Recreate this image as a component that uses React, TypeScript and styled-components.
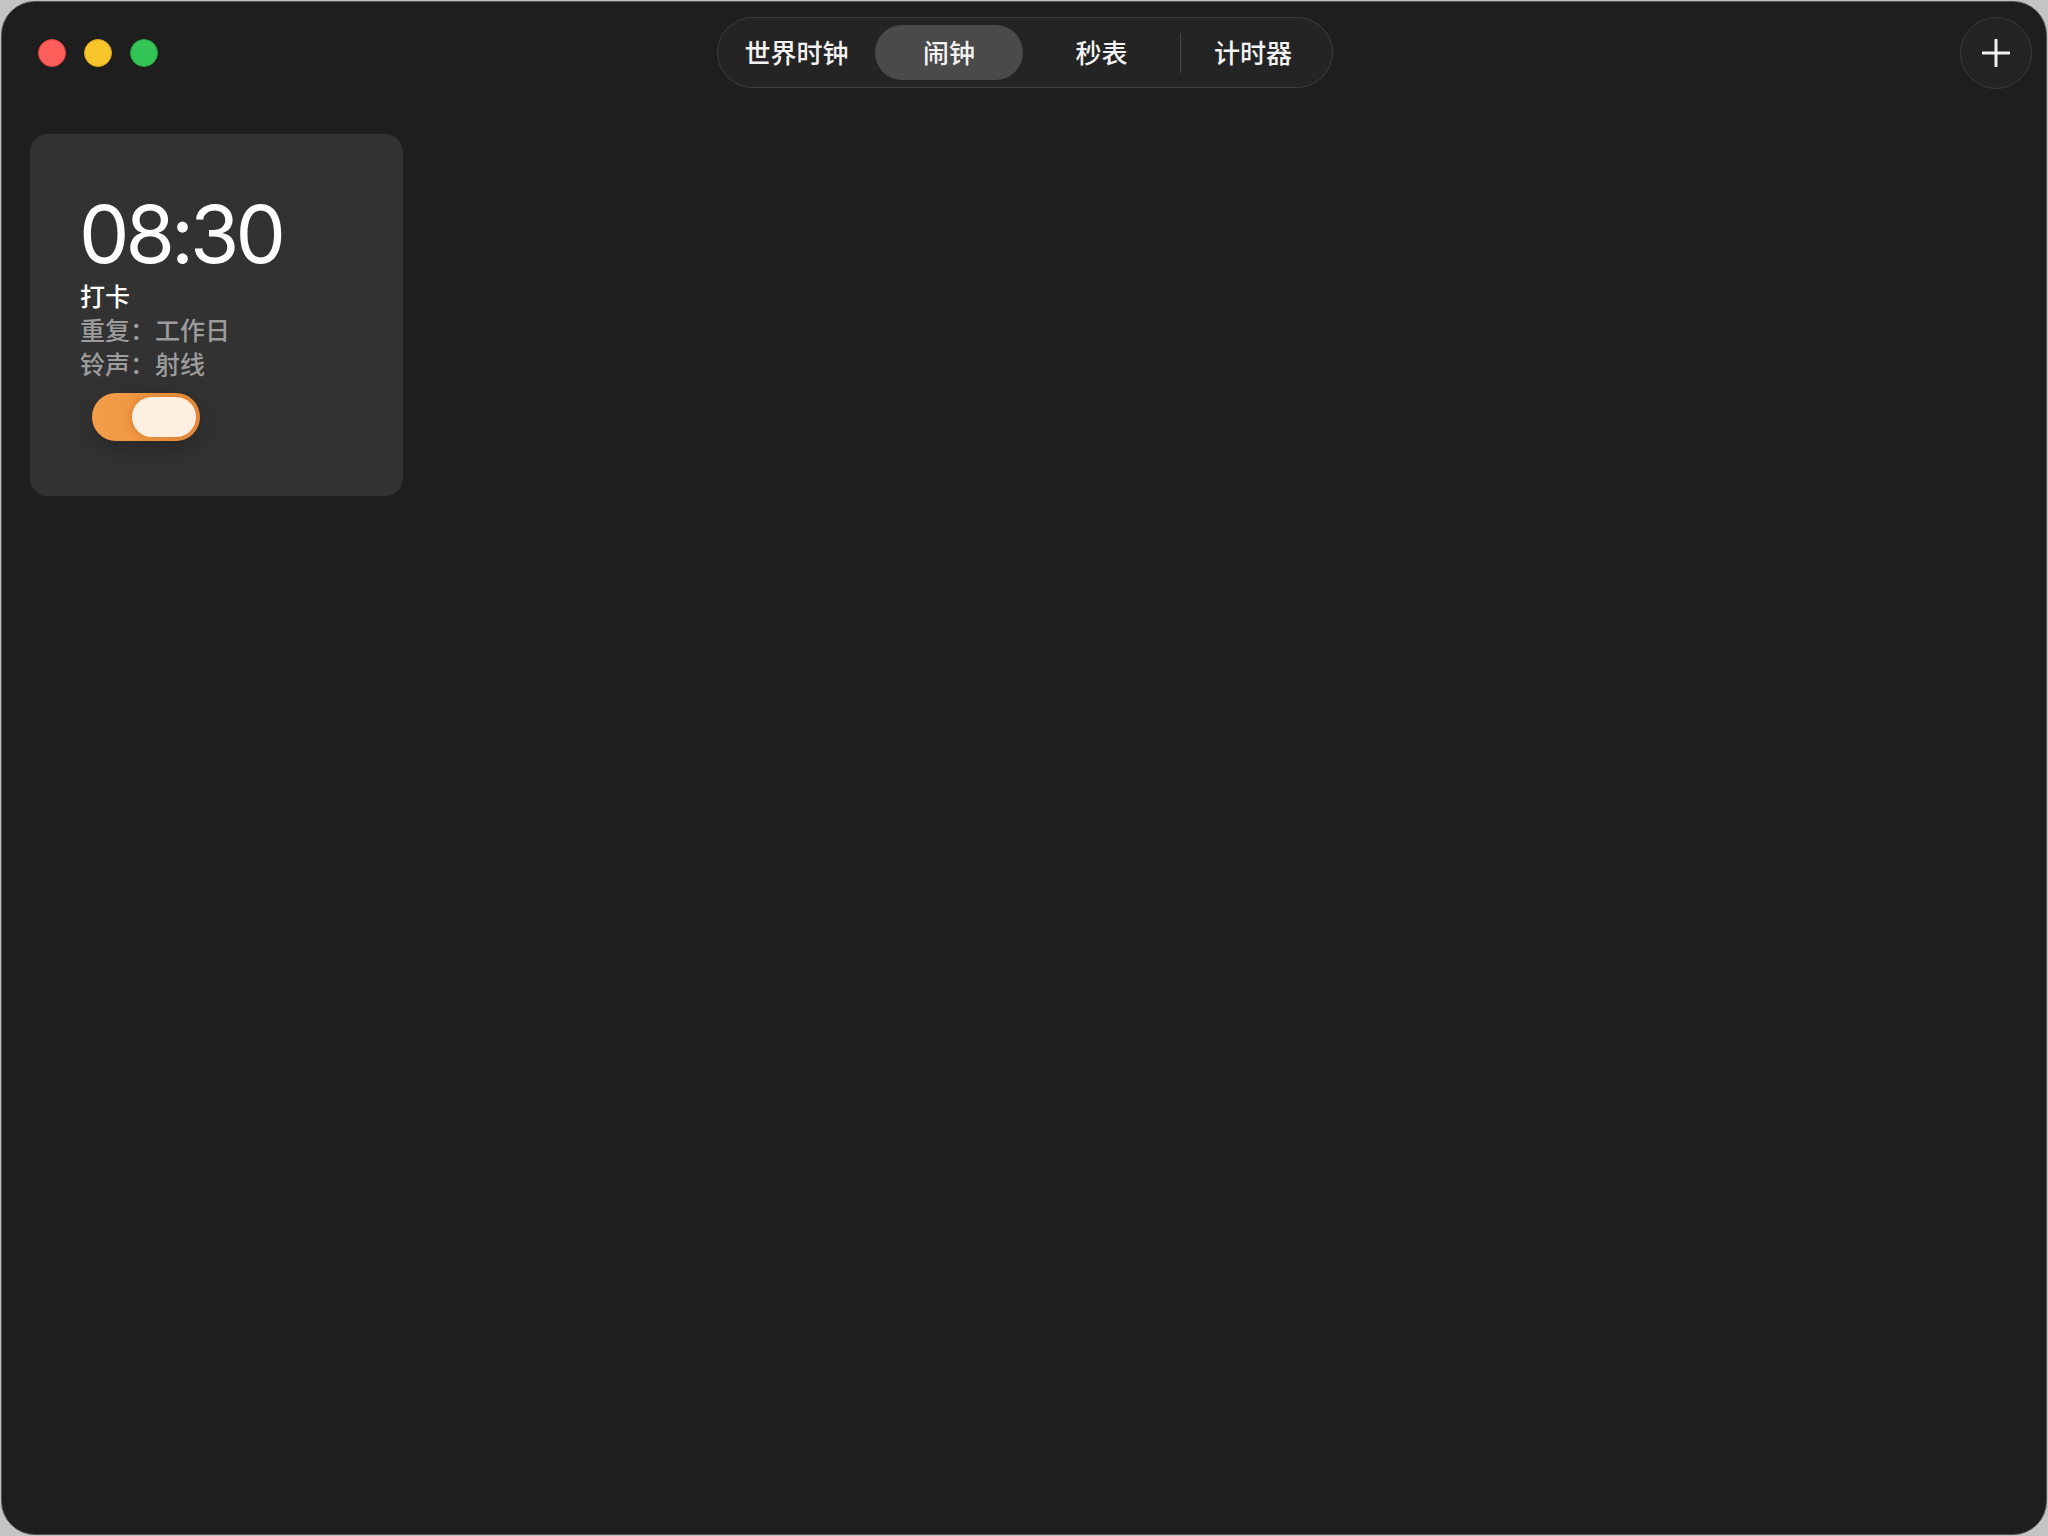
import React from "react";
import styled, { createGlobalStyle } from "styled-components";

const GlobalStyle = createGlobalStyle`
  html, body {
    margin: 0;
    padding: 0;
    background: #c4c4c4;
  }
  body {
    font-family: Inter, "Noto Sans", "Noto Sans CJK SC", sans-serif;
  }
`;

interface Alarm {
  time: string;
  label: string;
  repeat: string;
  sound: string;
  enabled: boolean;
}

const tabs = [
  { label: "世界时钟", width: 143 },
  { label: "闹钟", width: 148 },
  { label: "秒表", width: 157 },
  { label: "计时器", width: 144 },
];

const alarms: Alarm[] = [
  { time: "08:30", label: "打卡", repeat: "工作日", sound: "射线", enabled: true },
];

export default function App() {
  return (
    <>
      <GlobalStyle />
      <Window>
        <Header>
          <Lights>
            <Light color="#ff5f5a" ring="#e2443f" />
            <Light color="#f6c62c" ring="#dca81a" />
            <Light color="#33c555" ring="#20a53f" />
          </Lights>

          <Segmented>
            {tabs.map((tab, i) => (
              <React.Fragment key={tab.label}>
                {i === 3 && <Separator />}
                <Tab $active={i === 1} $width={tab.width} $gap={i === 0}>
                  {tab.label}
                </Tab>
              </React.Fragment>
            ))}
          </Segmented>

          <AddButton aria-label="添加">
            <svg width="28" height="28" viewBox="0 0 28 28">
              <path d="M14 1v26M1 14h26" stroke="#f2f2f2" strokeWidth="3" strokeLinecap="round" />
            </svg>
          </AddButton>
        </Header>

        <Content>
          {alarms.map((alarm) => (
            <AlarmCard key={alarm.time + alarm.label} alarm={alarm} />
          ))}
        </Content>
      </Window>
    </>
  );
}

const AlarmCard: React.FC<{ alarm: Alarm }> = ({ alarm }) => {
  return (
    <Card>
      <Time>{alarm.time}</Time>
      <Label>{alarm.label}</Label>
      <Meta>{`重复：${alarm.repeat}`}</Meta>
      <Meta>{`铃声：${alarm.sound}`}</Meta>
      <Toggle $on={alarm.enabled}>
        <Knob />
      </Toggle>
    </Card>
  );
};

const Window = styled.div`
  box-sizing: border-box;
  width: 2046px;
  height: 1534px;
  margin: 1px;
  background: #1e1e1e;
  border: 1px solid #505050;
  border-radius: 34px;
  overflow: hidden;
  display: flex;
  flex-direction: column;
`;

const Header = styled.div`
  height: 101px;
  display: flex;
  align-items: center;
  padding: 0 14px 0 36px;
`;

const Lights = styled.div`
  display: flex;
  gap: 18px;
`;

const Light = styled.div<{ color: string; ring: string }>`
  box-sizing: border-box;
  width: 28px;
  height: 28px;
  border-radius: 50%;
  background: ${(p) => p.color};
  border: 1px solid ${(p) => p.ring};
`;

const Segmented = styled.div`
  box-sizing: border-box;
  flex-shrink: 0;
  margin-left: 559px;
  height: 71px;
  padding: 0 7px;
  display: flex;
  align-items: center;
  background: #242424;
  border: 1px solid #3e3e3e;
  border-radius: 36px;
`;

const Tab = styled.div<{ $active: boolean; $width: number; $gap: boolean }>`
  box-sizing: border-box;
  flex-shrink: 0;
  width: ${(p) => p.$width}px;
  height: 55px;
  padding-bottom: 3px;
  margin-right: ${(p) => (p.$gap ? 7 : 0)}px;
  display: flex;
  align-items: center;
  justify-content: center;
  border-radius: 28px;
  background: ${(p) => (p.$active ? "#4a4a4a" : "transparent")};
  color: #f2f2f2;
  font-family: "Noto Sans CJK SC", sans-serif;
  font-size: 26px;
  font-weight: 500;
`;

const Separator = styled.div`
  flex-shrink: 0;
  width: 1px;
  height: 40px;
  background: #474747;
`;

const AddButton = styled.button`
  box-sizing: border-box;
  margin-left: auto;
  width: 72px;
  height: 72px;
  border-radius: 50%;
  background: #232323;
  border: 1px solid #3c3c3c;
  display: flex;
  align-items: center;
  justify-content: center;
  padding: 0;
`;

const Content = styled.div`
  padding: 31px 28px;
  display: flex;
  flex-wrap: wrap;
  gap: 24px;
`;

const Card = styled.div`
  box-sizing: border-box;
  width: 373px;
  height: 362px;
  padding: 68px 46px 0 50px;
  background: #323232;
  border-radius: 18px;
  display: flex;
  flex-direction: column;
  align-items: flex-start;
`;

const Time = styled.div`
  font-family: Inter, sans-serif;
  font-size: 80px;
  font-weight: 400;
  line-height: 64px;
  letter-spacing: -4px;
  color: #ffffff;
  margin-left: -1px;
`;

const Label = styled.div`
  margin-top: 12px;
  font-family: "Noto Sans CJK SC", sans-serif;
  font-size: 25px;
  font-weight: 500;
  line-height: 34px;
  color: #ffffff;
`;

const Meta = styled.div`
  font-family: "Noto Sans CJK SC", sans-serif;
  font-size: 25px;
  font-weight: 500;
  line-height: 34px;
  color: #9c9c9c;
`;

const Toggle = styled.div<{ $on: boolean }>`
  box-sizing: border-box;
  margin: 13px 0 0 12px;
  width: 108px;
  height: 48px;
  border-radius: 24px;
  padding: 4px;
  display: flex;
  justify-content: ${(p) => (p.$on ? "flex-end" : "flex-start")};
  background: ${(p) =>
    p.$on ? "linear-gradient(90deg, #f59d4a 0%, #ee9440 60%, #e8883a 100%)" : "#555"};
  box-shadow: 0 8px 24px rgba(0, 0, 0, 0.22);
`;

const Knob = styled.div`
  width: 64px;
  height: 40px;
  border-radius: 20px;
  background: #fdefe2;
  box-shadow: -2px 0 6px rgba(160, 80, 20, 0.25);
`;
